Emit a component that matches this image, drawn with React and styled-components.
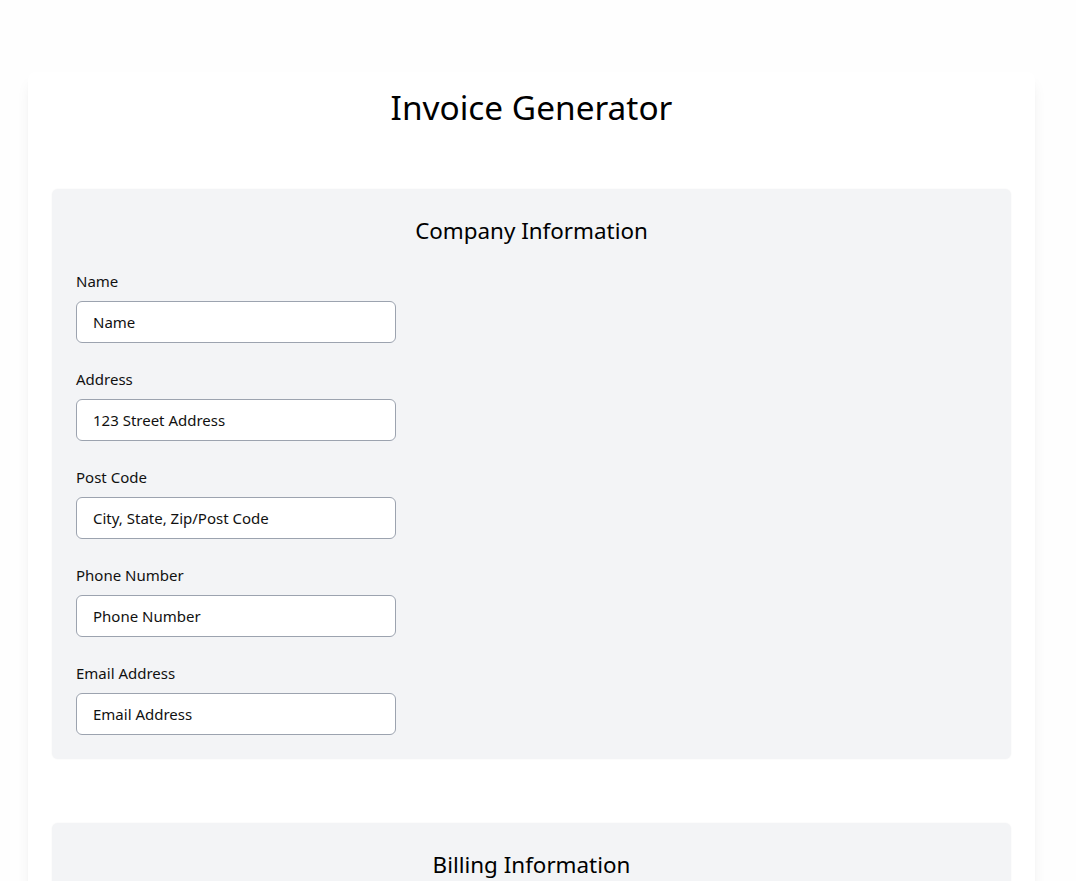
import React from 'react';
import styled, { createGlobalStyle } from 'styled-components';

const GlobalStyle = createGlobalStyle`
  * { box-sizing: border-box; }
  body {
    margin: 0;
    background: #fefefe;
    font-family: "Noto Sans", "Open Sans", sans-serif;
    color: #111;
  }
`;

const Page = styled.main`
  padding: 72px 41px 40px 28px;
`;

const Card = styled.div`
  background: #fff;
  border-radius: 8px;
  box-shadow: 0 10px 15px -3px rgba(0, 0, 0, 0.08), 0 4px 6px -4px rgba(0, 0, 0, 0.08);
  padding: 14px 24px 24px;
  display: flex;
  flex-direction: column;
  gap: 64px;
`;

const Title = styled.h1`
  margin: 0 0 -3px;
  text-align: center;
  font-size: 33.4px;
  line-height: 42px;
  font-weight: 400;
  color: #000;
`;

const Section = styled.section`
  background: #f3f4f6;
  border-radius: 6px;
  padding: 24px;
  box-shadow: 0 0 2px rgba(0, 0, 0, 0.06);
`;

const SectionTitle = styled.h2`
  margin: 0 0 22px;
  text-align: center;
  font-size: 22.4px;
  line-height: 36px;
  font-weight: 400;
  color: #000;
`;

const Fields = styled.div`
  display: flex;
  flex-direction: column;
  gap: 26px;
`;

const Field = styled.label`
  display: flex;
  flex-direction: column;
  gap: 10px;
  width: 320px;
`;

const LabelText = styled.span`
  font-size: 15px;
  line-height: 20px;
  color: #111;
`;

const Input = styled.input`
  height: 42px;
  width: 100%;
  padding: 0 16px;
  border: 1px solid #9ca3af;
  border-radius: 6px;
  background: #fff;
  font-family: inherit;
  font-size: 15px;
  color: #111;
  outline: none;
`;

const company = [
  ['Name', 'Name'],
  ['Address', '123 Street Address'],
  ['Post Code', 'City, State, Zip/Post Code'],
  ['Phone Number', 'Phone Number'],
  ['Email Address', 'Email Address'],
];

const billing = [
  ['Name', 'Name'],
  ['Address', '123 Street Address'],
  ['Post Code', 'City, State, Zip/Post Code'],
];

function FormSection({ title, fields }) {
  return (
    <Section>
      <SectionTitle>{title}</SectionTitle>
      <Fields>
        {fields.map(([label, value]) => (
          <Field key={label}>
            <LabelText>{label}</LabelText>
            <Input defaultValue={value} />
          </Field>
        ))}
      </Fields>
    </Section>
  );
}

export default function App() {
  return (
    <>
      <GlobalStyle />
      <Page>
        <Card>
          <Title>Invoice Generator</Title>
          <FormSection title="Company Information" fields={company} />
          <FormSection title="Billing Information" fields={billing} />
        </Card>
      </Page>
    </>
  );
}
